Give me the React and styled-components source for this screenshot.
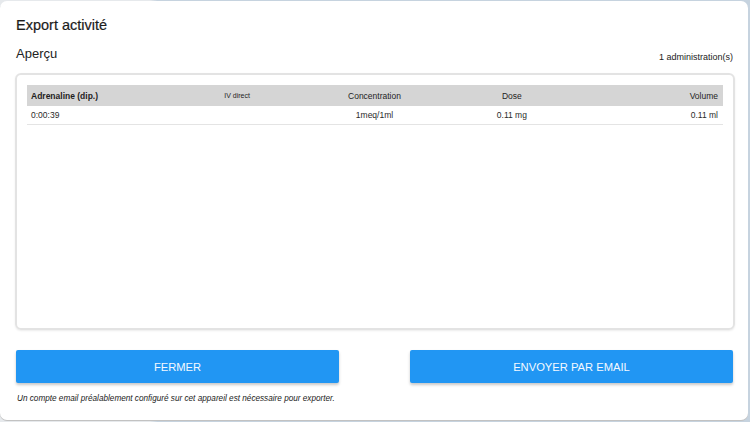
import React from "react";
import styled, { createGlobalStyle } from "styled-components";

const Global = createGlobalStyle`
  html, body {
    margin: 0;
    padding: 0;
  }
  body {
    font-family: "Liberation Sans", Arial, sans-serif;
    background: #fff;
  }
`;

const Backdrop = styled.div`
  width: 750px;
  height: 422px;
  box-sizing: border-box;
  padding: 1px 2px 2px 0;
  background: linear-gradient(to right, #e6e9ec 0%, #e6e9ec 20%, #c6d3df 21%, #c6d3df 100%);
`;

const Modal = styled.div`
  height: 100%;
  box-sizing: border-box;
  background: #fff;
  border-radius: 7px;
  padding: 15px 15px 0 16px;
  display: flex;
  flex-direction: column;
  box-shadow: 0 1px 0 #c2c2c2;
`;

const Title = styled.h1`
  margin: 0;
  font-size: 14.5px;
  line-height: 18px;
  font-weight: 400;
  color: #1c1c1c;
  -webkit-text-stroke: 0.2px #1c1c1c;
`;

const SubHeader = styled.div`
  margin-top: 12px;
  height: 17px;
  display: flex;
  justify-content: space-between;
  align-items: flex-end;
`;

const SubTitle = styled.h2`
  margin: 0 0 1px;
  font-size: 13px;
  line-height: 16px;
  font-weight: 400;
  color: #222;
`;

const Count = styled.span`
  font-size: 9px;
  line-height: 11px;
  color: #222;
`;

const Panel = styled.div`
  margin: 10px -2px 0 -1px;
  height: 257px;
  box-sizing: border-box;
  border: 2px solid #e3e3e3;
  border-radius: 6px;
  box-shadow: 0 1px 2px rgba(0, 0, 0, 0.08);
  padding: 10px;
`;

const Row = styled.div`
  display: grid;
  grid-template-columns: repeat(5, 1fr);
  align-items: center;
  height: ${(p) => (p.$head ? "21px" : "18px")};
  background: ${(p) => (p.$head ? "#d5d5d5" : "transparent")};
  border-bottom: ${(p) => (p.$head ? "none" : "1px solid #e4e4e4")};
  padding: 0 5px 0 4px;
  font-size: 8.5px;
  color: ${(p) => (p.$head ? "#1e1e1e" : "#2a2a2a")};
`;

const Cell = styled.span`
  text-align: ${(p) => p.$align || "center"};
  font-weight: ${(p) => (p.$bold ? 700 : 400)};
  font-size: ${(p) => (p.$small ? "7px" : "inherit")};
  white-space: nowrap;
`;

const Actions = styled.div`
  margin-top: 20px;
  display: flex;
  justify-content: space-between;
`;

const Button = styled.button`
  width: 323px;
  height: 33px;
  border: none;
  border-radius: 2px;
  background: #2196f3;
  color: #f4f9ff;
  font-family: "Liberation Sans", Arial, sans-serif;
  font-size: 11.2px;
  text-transform: uppercase;
  box-shadow: 0 2px 3px rgba(0, 0, 0, 0.22);
  cursor: pointer;
`;

const Note = styled.p`
  margin: 11px 0 0 1px;
  font-size: 8.2px;
  line-height: 10px;
  font-style: italic;
  color: #222;
`;

export default function App() {
  return (
    <>
      <Global />
      <Backdrop>
        <Modal>
          <Title>Export activité</Title>
          <SubHeader>
            <SubTitle>Aperçu</SubTitle>
            <Count>1 administration(s)</Count>
          </SubHeader>
          <Panel>
            <Row $head>
              <Cell $align="left" $bold>Adrenaline (dip.)</Cell>
              <Cell $small>IV direct</Cell>
              <Cell>Concentration</Cell>
              <Cell>Dose</Cell>
              <Cell $align="right">Volume</Cell>
            </Row>
            <Row>
              <Cell $align="left">0:00:39</Cell>
              <Cell />
              <Cell>1meq/1ml</Cell>
              <Cell>0.11 mg</Cell>
              <Cell $align="right">0.11 ml</Cell>
            </Row>
          </Panel>
          <Actions>
            <Button>Fermer</Button>
            <Button>Envoyer par email</Button>
          </Actions>
          <Note>
            Un compte email préalablement configuré sur cet appareil est
            nécessaire pour exporter.
          </Note>
        </Modal>
      </Backdrop>
    </>
  );
}
